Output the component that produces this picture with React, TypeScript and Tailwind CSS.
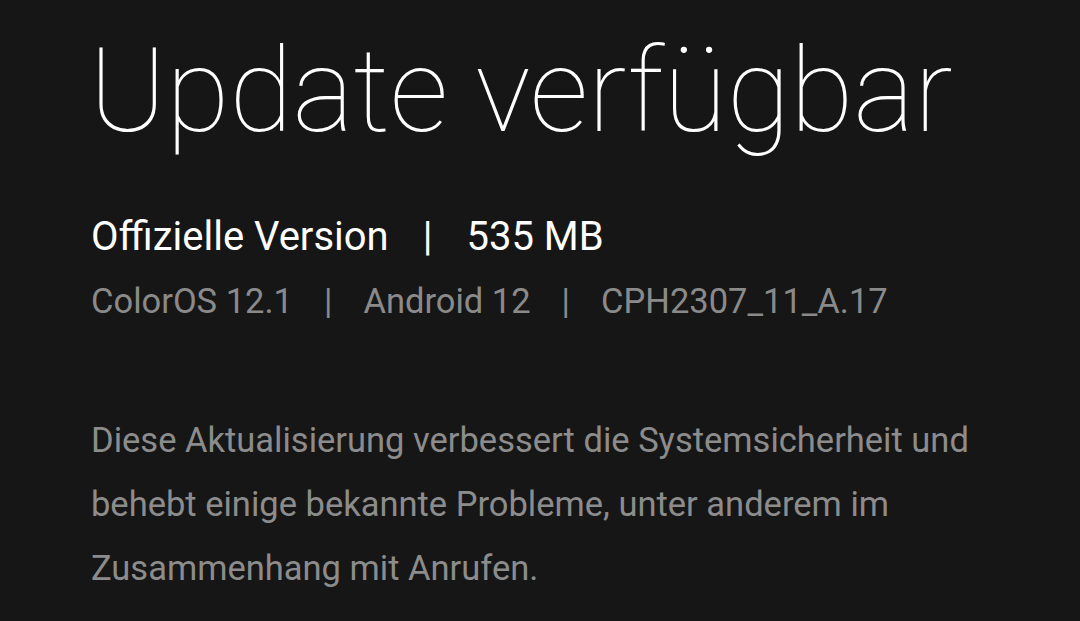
export default function App() {
  return (
    <div className="w-[1080px] h-[621px] overflow-hidden bg-[#161616] font-['Roboto',sans-serif] pl-[91px]">
      <h1 className="text-[116px] leading-none font-thin text-white tracking-[-0.3px] pt-[33px] -ml-[2px]">
        Update verfügbar
      </h1>
      <div className="mt-[68px] flex items-center text-[40px] leading-none text-white">
        <span>Offizielle Version</span>
        <span className="px-[34px]">|</span>
        <span>535 MB</span>
      </div>
      <div className="mt-[27px] flex items-center text-[34.5px] leading-none text-[#8a8a8a]">
        <span>ColorOS 12.1</span>
        <span className="px-[31px]">|</span>
        <span>Android 12</span>
        <span className="px-[31px]">|</span>
        <span>CPH2307_11_A.17</span>
      </div>
      <p className="mt-[89px] w-[920px] text-[34.5px] leading-[64px] text-[#8c8c8c]">
        Diese Aktualisierung verbessert die Systemsicherheit und behebt einige bekannte Probleme, unter anderem im Zusammenhang mit Anrufen.
      </p>
    </div>
  );
}
